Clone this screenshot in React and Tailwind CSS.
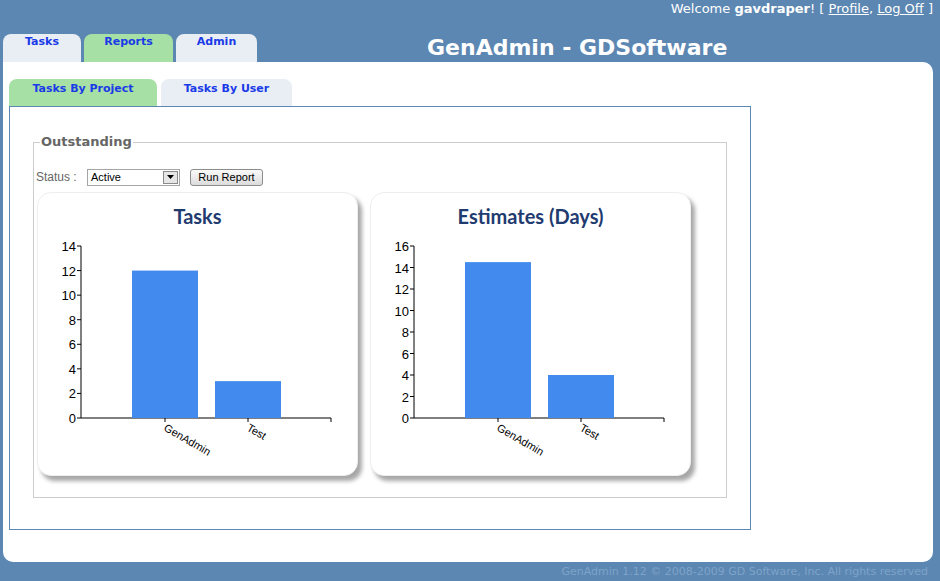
const bar = '#428aee';

const Chart = ({ title, max, step, values }) => {
  const top = 13;
  const bottom = 185;
  const ax = 43;
  const scale = (bottom - top) / max;
  const ticks = [];
  for (let v = 0; v <= max; v += step) ticks.push(v);
  const bars = [
    { x: 94, label: 'GenAdmin', v: values[0] },
    { x: 177, label: 'Test', v: values[1] },
  ];

  return (
    <div className="w-[321px] h-[284px] rounded-[14px] bg-white border border-[#eeeeee] shadow-[4px_5px_4px_rgba(0,0,0,0.35)] flex flex-col">
      <div className="h-[40px] pt-[12px] text-center text-[20px] font-bold text-[#1f3b6f] font-['Lato',sans-serif] leading-[23px]">
        {title}
      </div>
      <svg width="320" height="240" className="block">
        <line x1={ax} y1={top} x2={ax} y2={bottom} stroke="#000" />
        <line x1={ax} y1={bottom} x2={293} y2={bottom} stroke="#000" />
        {ticks.map((t) => {
          const y = bottom - t * scale;
          return (
            <g key={t}>
              <line x1={ax - 4} y1={y} x2={ax} y2={y} stroke="#000" />
              <text
                x={ax - 5}
                y={y + 5}
                textAnchor="end"
                fontSize="13"
                fontFamily="Liberation Sans, Arial, sans-serif"
                fill="#000"
              >
                {t}
              </text>
            </g>
          );
        })}
        {bars.map((b) => (
          <g key={b.label}>
            <rect x={b.x} y={bottom - b.v * scale} width={66} height={b.v * scale} fill={bar} />
            <line x1={b.x + 33} y1={bottom} x2={b.x + 33} y2={bottom + 4} stroke="#000" />
            <text
              x={b.x + 31}
              y={bottom + 12}
              fontSize="11"
              fontFamily="Liberation Sans, Arial, sans-serif"
              fill="#000"
              transform={`rotate(30 ${b.x + 31} ${bottom + 12})`}
            >
              {b.label}
            </text>
          </g>
        ))}
        <line x1={293} y1={bottom} x2={293} y2={bottom + 4} stroke="#000" />
      </svg>
    </div>
  );
};

const TopTab = ({ label, active, w }) => (
  <div
    className={`h-[28px] rounded-t-[8px] text-center pt-[1px] text-[11px] font-bold text-[#1a3ae8] leading-[14px] ${w} ${
      active ? 'bg-[#a6e0a4]' : 'bg-[#e8eef4]'
    }`}
  >
    {label}
  </div>
);

export default function App() {
  return (
    <div className="w-[940px] h-[581px] bg-[#5c87b2] font-['DejaVu_Sans',Verdana,sans-serif] overflow-hidden">
      <div className="h-[62px] flex flex-col">
        <div className="h-[20px] pt-[1px] pr-[7px] text-right text-[13px] text-white leading-[16px]">
          Welcome <b>gavdraper</b>! [ <span className="underline">Profile</span>,{' '}
          <span className="underline">Log Off</span> ]
        </div>
        <div className="flex items-end flex-1 pl-[3px]">
          <div className="flex gap-[3px]">
            <TopTab label="Tasks" w="w-[78px]" />
            <TopTab label="Reports" active w="w-[89px]" />
            <TopTab label="Admin" w="w-[81px]" />
          </div>
          <div className="ml-[170px] mb-[1px] text-[22px] font-bold text-white leading-[26px]">
            GenAdmin - GDSoftware
          </div>
        </div>
      </div>

      <div className="ml-[3px] w-[930px] h-[500px] bg-white rounded-tr-[10px] rounded-b-[10px] pt-[17px] pl-[6px]">
        <div className="flex gap-[4px]">
          <div className="w-[148px] h-[27px] rounded-t-[8px] bg-[#a6e0a4] text-center pt-[2px] text-[11px] font-bold text-[#1a3ae8]">
            Tasks By Project
          </div>
          <div className="w-[131px] h-[27px] rounded-t-[8px] bg-[#e8eef4] text-center pt-[2px] text-[11px] font-bold text-[#1a3ae8]">
            Tasks By User
          </div>
        </div>
        <div className="w-[742px] h-[424px] border border-[#5c87b2] pt-[27px] pl-[23px]">
          <fieldset className="w-[694px] h-[364px] border border-[#cccccc] px-[1px]">
            <legend className="ml-[5px] px-[1px] text-[13px] font-bold text-[#666666] leading-[16px]">
              Outstanding
            </legend>
            <div className="flex items-center mt-[18px] h-[18px]">
              <span className="text-[12px] text-[#666666] font-['Liberation_Sans',sans-serif] ml-[1px] w-[51px]">
                Status :
              </span>
              <div className="w-[93px] h-[17px] border border-[#a5a5a5] flex items-center">
                <span className="flex-1 pl-[3px] text-[11px] text-black font-['Liberation_Sans',sans-serif]">
                  Active
                </span>
                <div className="w-[15px] h-[13px] mr-[1px] border border-[#8a8a8a] bg-[#e6e6e6] flex items-center justify-center">
                  <svg width="7" height="4">
                    <path d="M0 0h7L3.5 4z" fill="#000" />
                  </svg>
                </div>
              </div>
              <div className="ml-[10px] w-[73px] h-[17px] rounded-[3px] border border-[#8c8c8c] bg-gradient-to-b from-[#fafafa] to-[#dcdcdc] text-center text-[11px] leading-[15px] text-black font-['Liberation_Sans',sans-serif]">
                Run Report
              </div>
            </div>
            <div className="flex gap-[12px] mt-[6px] ml-[2px]">
              <Chart title="Tasks" max={14} step={2} values={[12, 3]} />
              <Chart title="Estimates (Days)" max={16} step={2} values={[14.5, 4]} />
            </div>
          </fieldset>
        </div>
      </div>

      <div className="h-[19px] pr-[12px] text-right text-[11px] leading-[19px] text-[#7ea3c8]">
        GenAdmin 1.12 © 2008-2009 GD Software, Inc. All rights reserved
      </div>
    </div>
  );
}
